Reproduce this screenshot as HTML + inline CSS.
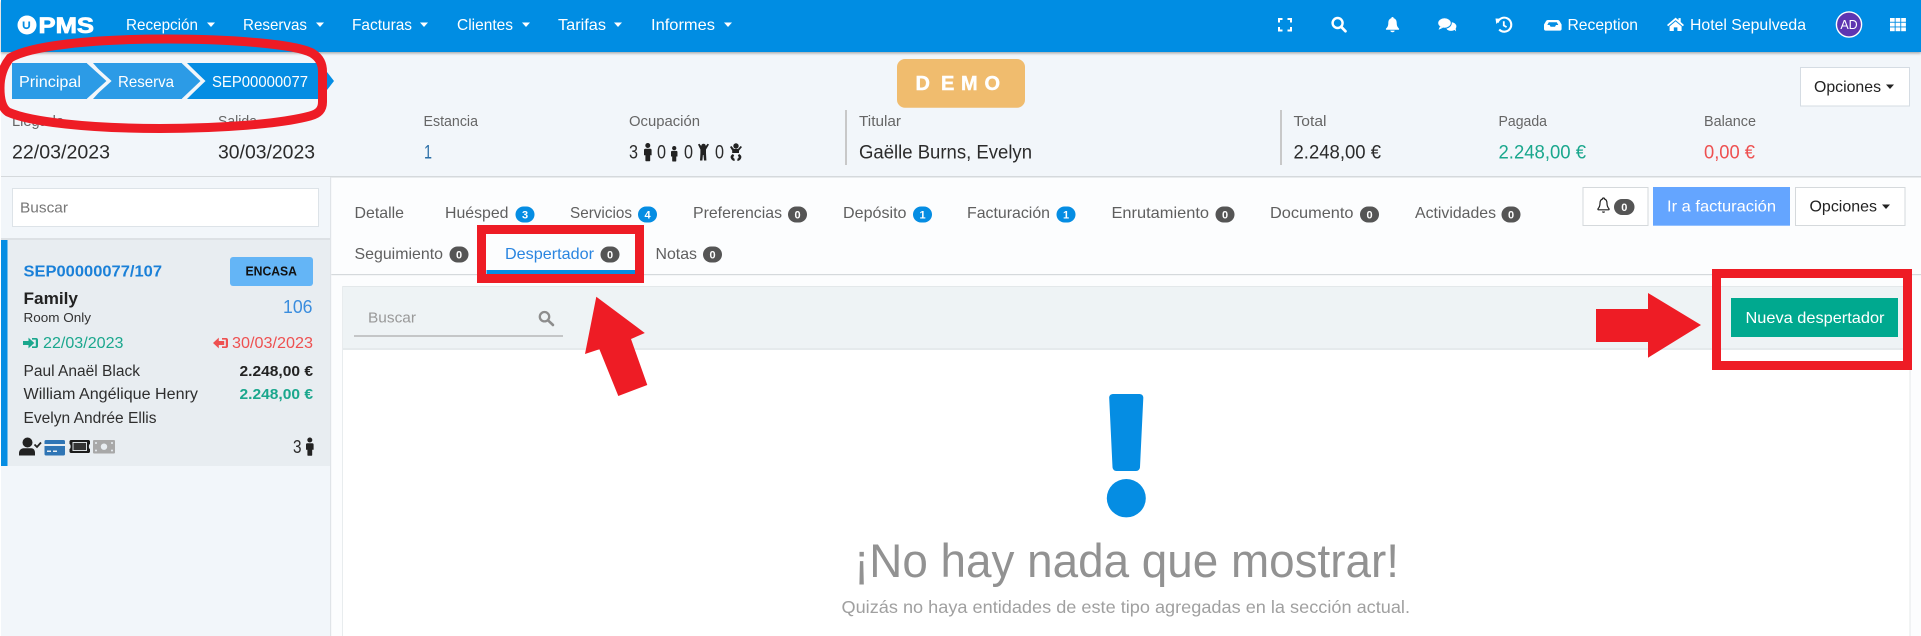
<!DOCTYPE html>
<html lang="es">
<head>
<meta charset="utf-8">
<title>PMS - Despertador</title>
<style>
html,body{margin:0;padding:0;background:#fff;width:1921px;height:636px;overflow:hidden}
svg{display:block;position:absolute;left:0;top:0}
text{font-family:"Liberation Sans",sans-serif;font-size:15px}
.n{fill:#fff;font-size:16px}
.l{fill:#666;font-size:14.5px}
.v{fill:#2b2b2b;font-size:19px}
.t{fill:#5f5f5f;font-size:16px}
.bt{fill:#fff;font-size:11px;font-weight:700;text-anchor:middle}
.c{fill:#2e2e2e;font-size:15.5px}
</style>
</head>
<body>
<svg width="1921" height="636" viewBox="0 0 1921 636" xmlns="http://www.w3.org/2000/svg">
<defs>
<filter id="s" x="-1%" y="-20%" width="102%" height="150%"><feDropShadow dx="0" dy="1.5" stdDeviation="1.2" flood-color="#000" flood-opacity=".3"/></filter>
<g id="bb"><rect x="-9.5" y="-8" width="19" height="16" rx="8"/></g>
<g id="person"><circle cx="3.8" cy="2.5" r="2.5"/><path d="M1.3 5.8h5c.8 0 1.3.6 1.3 1.300v5.200H6.200v5.200c0 .6-.5 .8-1 .8H2.400c-.5 0-1-.2-1-.8V12.300H0V7.100c0-.7.5-1.300 1.300-1.300z"/></g>
</defs>

<rect x="0" y="0" width="1921" height="636" fill="#fff"/>

<!-- sub header -->
<rect x="1" y="52" width="1920" height="124" fill="#f2f6fa"/>
<rect x="1" y="176" width="1920" height="1.5" fill="#d5d9dc"/>

<!-- navbar -->
<rect x="1" y="0" width="1920" height="52" fill="#058de3" filter="url(#s)"/>

<!-- logo -->
<circle cx="27" cy="25" r="9.5" fill="#fff"/>
<path d="M18 21c2-6 8-8 12-6" stroke="#058de3" stroke-width="1.2" fill="none"/>
<path d="M23.600 21.500v4.200c0 3.400 5.600 3.400 5.600 0v-4.200" stroke="#058de3" stroke-width="1.800" fill="none"/>
<text x="38.5" y="33" textLength="55.5" lengthAdjust="spacingAndGlyphs" style="font-size:22px;font-weight:700;fill:#fff;stroke:#fff;stroke-width:.8">PMS</text>

<!-- nav -->
<text class="n" x="126" y="30" textLength="72" lengthAdjust="spacingAndGlyphs">Recepción</text>
<path d="M207 22.500h8l-4 4.500z" fill="#fff"/>
<text class="n" x="243" y="30" textLength="64" lengthAdjust="spacingAndGlyphs">Reservas</text>
<path d="M316 22.500h8l-4 4.500z" fill="#fff"/>
<text class="n" x="352" y="30" textLength="60" lengthAdjust="spacingAndGlyphs">Facturas</text>
<path d="M420 22.500h8l-4 4.500z" fill="#fff"/>
<text class="n" x="457" y="30" textLength="56" lengthAdjust="spacingAndGlyphs">Clientes</text>
<path d="M522 22.500h8l-4 4.500z" fill="#fff"/>
<text class="n" x="558" y="30" textLength="48" lengthAdjust="spacingAndGlyphs">Tarifas</text>
<path d="M614 22.500h8l-4 4.500z" fill="#fff"/>
<text class="n" x="651" y="30" textLength="64" lengthAdjust="spacingAndGlyphs">Informes</text>
<path d="M724 22.500h8l-4 4.500z" fill="#fff"/>

<!-- nav icons -->
<path d="M1279 22.500V19h3.500M1287.500 19h3.500v3.500M1291 27v3.500h-3.500M1282.500 30.500H1279V27" fill="none" stroke="#fff" stroke-width="2"/>
<circle cx="1337.600" cy="23" r="5" fill="none" stroke="#fff" stroke-width="2.400"/>
<path d="M1341.200 26.800l4.200 4.400" stroke="#fff" stroke-width="2.800" stroke-linecap="round"/>
<path d="M1392.500 17c.8 0 1.200.5 1.200 1.200 2.300.6 3 2.600 3 4.800 0 3.400 1.200 4.400 2.300 5.600.3.600 0 1.200-.6 1.200h-11.800c-.6 0-.9-.6-.6-1.200 1.100-1.200 2.300-2.200 2.300-5.600 0-2.200.7-4.200 3-4.800 0-.7.4-1.200 1.200-1.200z" fill="#fff"/>
<path d="M1390.300 30.600h4.400c0 1-1 1.600-2.200 1.600s-2.200-.6-2.200-1.600z" fill="#fff"/>
<ellipse cx="1451" cy="26.500" rx="5.400" ry="4.400" fill="#fff"/>
<path d="M1453.500 29l2.600 2.400-.6-3.600z" fill="#fff"/>
<ellipse cx="1444.500" cy="23" rx="6.800" ry="5.200" fill="#fff" stroke="#058de3" stroke-width="1"/>
<path d="M1440 26.500l-1.400 3.200 4.400-2z" fill="#fff"/>
<path d="M1497.600 22.500a7 7 0 1 1 1.600 7" fill="none" stroke="#fff" stroke-width="2.100"/>
<path d="M1495.500 18.500l6 .3-5.200 5.200z" fill="#fff"/>
<path d="M1503.800 21.200v4.300l2.800 1.600" fill="none" stroke="#fff" stroke-width="1.800"/>
<path d="M1548 20h9.500c1 0 1.600.4 2.100 1.100l2 3.400v4.500c0 .9-.7 1.600-1.600 1.600h-14.400c-.9 0-1.600-.7-1.600-1.600v-4.500l2-3.400c.5-.7 1.100-1.100 2-1.100z" fill="#fff"/>
<path d="M1548.800 22.200h8l1.500 2.800h-2.300l-1 1.800h-4.400l-1-1.800h-2.300z" fill="#058de3"/>
<text class="n" x="1567.500" y="30" textLength="70.500" lengthAdjust="spacingAndGlyphs">Reception</text>
<path d="M1667 25l8.600-7.400 2.900 2.500v-2h2.200v3.900l3.300 3-1.200 1.300-7.200-6.200-7.400 6.200z" fill="#fff"/>
<path d="M1669.600 26.400l6-5 6 5v4.600h-4.200v-3.600h-3.600V31h-4.200z" fill="#fff"/>
<text class="n" x="1690" y="30" textLength="116" lengthAdjust="spacingAndGlyphs">Hotel Sepulveda</text>
<circle cx="1849" cy="24.500" r="12.600" fill="#5e35b1" stroke="#fff" stroke-width="1.400"/>
<text x="1849" y="29" text-anchor="middle" style="font-size:12.500px;fill:#fff">AD</text>
<g fill="#fff">
<rect x="1890" y="18" width="4.700" height="3.800"/><rect x="1895.600" y="18" width="4.700" height="3.800"/><rect x="1901.200" y="18" width="4.700" height="3.800"/>
<rect x="1890" y="22.700" width="4.700" height="3.800"/><rect x="1895.600" y="22.700" width="4.700" height="3.800"/><rect x="1901.200" y="22.700" width="4.700" height="3.800"/>
<rect x="1890" y="27.400" width="4.700" height="3.800"/><rect x="1895.600" y="27.400" width="4.700" height="3.800"/><rect x="1901.200" y="27.400" width="4.700" height="3.800"/>
</g>

<!-- breadcrumb -->
<path d="M320 63L334 81L320 99z" fill="#058de3"/>
<path d="M12 63H88L110 81L88 99H12z" fill="#2c9be6"/>
<path d="M187 63H318V99H187L205 81z" fill="#058de3"/>
<path d="M93 63H183L203 81L183 99H93L109 81z" fill="#2c9be6"/>
<path d="M88 62L109 81L88 100M183 62L203 81L183 100" fill="none" stroke="#f2f6fa" stroke-width="3.500"/>
<text x="19" y="87" textLength="62" lengthAdjust="spacingAndGlyphs" style="font-size:16px;fill:#fff">Principal</text>
<text x="118" y="87" textLength="56" lengthAdjust="spacingAndGlyphs" style="font-size:16px;fill:#fff">Reserva</text>
<text x="212" y="87" textLength="96" lengthAdjust="spacingAndGlyphs" style="font-size:16px;fill:#fff">SEP00000077</text>

<!-- DEMO -->
<rect x="897" y="59" width="128" height="48.700" rx="8" fill="#f0bc6e"/>
<g style="font-weight:700;fill:#fff;stroke:#fff;stroke-width:.4">
<text x="915.500" y="90" style="font-size:20px;font-weight:700">D</text>
<text x="941" y="90" style="font-size:20px;font-weight:700">E</text>
<text x="961" y="90" style="font-size:20px;font-weight:700">M</text>
<text x="984.500" y="90" style="font-size:20px;font-weight:700">O</text>
</g>

<!-- top options -->
<rect x="1800.500" y="67.500" width="109" height="38.500" fill="#fff" stroke="#d5dce3"/>
<text x="1814" y="92" textLength="67" lengthAdjust="spacingAndGlyphs" style="font-size:16px;fill:#222">Opciones</text>
<path d="M1886 84.500h8l-4 4.500z" fill="#222"/>

<!-- summary -->
<text class="l" x="12" y="126" textLength="52" lengthAdjust="spacingAndGlyphs">Llegada</text>
<text class="l" x="218" y="126" textLength="39" lengthAdjust="spacingAndGlyphs">Salida</text>
<text class="l" x="423.500" y="126" textLength="54.500" lengthAdjust="spacingAndGlyphs">Estancia</text>
<text class="l" x="629" y="126" textLength="71" lengthAdjust="spacingAndGlyphs">Ocupación</text>
<text class="v" x="12" y="158.500" textLength="98" lengthAdjust="spacingAndGlyphs">22/03/2023</text>
<text class="v" x="218" y="158.500" textLength="97" lengthAdjust="spacingAndGlyphs">30/03/2023</text>
<text class="v" x="424" y="158.500" style="fill:#2a6ea6" textLength="8" lengthAdjust="spacingAndGlyphs">1</text>
<text class="v" x="629" y="158.500" textLength="9" lengthAdjust="spacingAndGlyphs">3</text>
<use href="#person" x="644" y="143" fill="#222"/>
<text class="v" x="657" y="158.500" textLength="9" lengthAdjust="spacingAndGlyphs">0</text>
<use href="#person" transform="translate(671,146) scale(.85,.85)" fill="#222"/>
<text class="v" x="684" y="158.500" textLength="9" lengthAdjust="spacingAndGlyphs">0</text>
<g fill="#222"><circle cx="703.500" cy="146" r="2.300"/><path d="M698 144.500l1.400-.8 2.400 3h3.400l2.400-3 1.400.8-3 5v3.700l.4 7.300h-2.400l-.5-5.500h-.6l-.5 5.500h-2.400l.4-7.300v-3.700z"/></g>
<text class="v" x="715" y="158.500" textLength="9" lengthAdjust="spacingAndGlyphs">0</text>
<g fill="#222"><circle cx="736" cy="146" r="2.700"/><path d="M730 147l1.400-1 2.600 3h4l2.600-3 1.400 1-3 3.600v2.400h-6.800v-2.400z"/><path d="M733 154c-2 1-3 2.500-2 4.500.7 1.400 2 2.300 3.600 2.500v-2.200c-1.400-.4-1.800-2-.4-3zM739 154c2 1 3 2.500 2 4.500-.7 1.400-2 2.300-3.600 2.500v-2.200c1.400-.4 1.800-2 .4-3z"/></g>

<rect x="845" y="110" width="2" height="55" fill="#c8c8c8"/>
<text class="l" x="859" y="126" textLength="42" lengthAdjust="spacingAndGlyphs">Titular</text>
<text class="v" x="859" y="158.500" textLength="173" lengthAdjust="spacingAndGlyphs">Gaëlle Burns, Evelyn</text>
<rect x="1280" y="110" width="2" height="55" fill="#c8c8c8"/>
<text class="l" x="1293.500" y="126" textLength="33" lengthAdjust="spacingAndGlyphs">Total</text>
<text class="v" x="1293.500" y="158.500" textLength="87.500" lengthAdjust="spacingAndGlyphs">2.248,00 €</text>
<text class="l" x="1498.500" y="126" textLength="48.500" lengthAdjust="spacingAndGlyphs">Pagada</text>
<text class="v" x="1498.500" y="158.500" textLength="87.500" lengthAdjust="spacingAndGlyphs" style="fill:#1aa78d">2.248,00 €</text>
<text class="l" x="1704" y="126" textLength="52" lengthAdjust="spacingAndGlyphs">Balance</text>
<text class="v" x="1704" y="158.500" textLength="51" lengthAdjust="spacingAndGlyphs" style="fill:#ee5050">0,00 €</text>

<!-- left panel -->
<rect x="1" y="177" width="329" height="459" fill="#f2f6fa"/>
<rect x="330" y="177" width="1.300" height="459" fill="#e0e4e8"/>
<rect x="12.500" y="188.500" width="306" height="38" fill="#fff" stroke="#dde3e8"/>
<text x="20" y="212.500" textLength="48" lengthAdjust="spacingAndGlyphs" style="font-size:15px;fill:#777">Buscar</text>
<rect x="1" y="238" width="329" height="2" fill="#dde1e5"/>
<rect x="1" y="240" width="329" height="226" fill="#e8edf1"/>
<rect x="1" y="240" width="6.500" height="226" fill="#058de3"/>
<text x="23.500" y="276.500" textLength="138.500" lengthAdjust="spacingAndGlyphs" style="font-size:16px;font-weight:700;fill:#1a80d8">SEP00000077/107</text>
<rect x="230" y="257" width="83" height="29" rx="3" fill="#64b5f6"/>
<text x="245.500" y="275.500" textLength="51.500" lengthAdjust="spacingAndGlyphs" style="font-size:12.500px;font-weight:700;fill:#111">ENCASA</text>
<text x="23.500" y="304" textLength="54.500" lengthAdjust="spacingAndGlyphs" style="font-size:17px;font-weight:700;fill:#222">Family</text>
<text x="23.500" y="322" textLength="67.500" lengthAdjust="spacingAndGlyphs" style="font-size:13px;fill:#333">Room Only</text>
<text x="283" y="313" textLength="29.500" lengthAdjust="spacingAndGlyphs" style="font-size:18px;fill:#3a8dde">106</text>
<path d="M23 341h5.500v-3.400l5.800 5.400-5.800 5.400V345H23z" fill="#1aa78d"/>
<path d="M32 338h4c1.200 0 2 .8 2 2v6c0 1.200-.8 2-2 2h-4v-1.600h3.800v-6.800H32z" fill="#1aa78d"/>
<text x="43" y="348" textLength="80.500" lengthAdjust="spacingAndGlyphs" style="font-size:15.500px;fill:#1aa78d">22/03/2023</text>
<path d="M213 343l5.800-5.400V341h5.400v4h-5.400v3.400z" fill="#ee5050"/>
<path d="M222 338h4c1.200 0 2 .8 2 2v6c0 1.200-.8 2-2 2h-4v-1.600h3.800v-6.800H222z" fill="#ee5050"/>
<text x="232" y="348" textLength="81" lengthAdjust="spacingAndGlyphs" style="font-size:15.500px;fill:#ee5050">30/03/2023</text>
<text class="c" x="23.500" y="376" textLength="116.500" lengthAdjust="spacingAndGlyphs">Paul Anaël Black</text>
<text x="239.500" y="376" textLength="73.500" lengthAdjust="spacingAndGlyphs" style="font-size:15px;font-weight:700;fill:#222">2.248,00 €</text>
<text class="c" x="23.500" y="399" textLength="174.500" lengthAdjust="spacingAndGlyphs">William Angélique Henry</text>
<text x="239.500" y="399" textLength="73.500" lengthAdjust="spacingAndGlyphs" style="font-size:15px;font-weight:700;fill:#1aa78d">2.248,00 €</text>
<text class="c" x="23.500" y="423" textLength="133" lengthAdjust="spacingAndGlyphs">Evelyn Andrée Ellis</text>

<!-- card icons -->
<circle cx="27.500" cy="442.500" r="5" fill="#222"/>
<path d="M19 455.500v-2.500c0-3 2.500-4.800 4.500-4.800h8c2 0 3.500 1.800 3.500 4.800v2.500z" fill="#222"/>
<path d="M34.500 444.500l2.500 2.500 4-4.500" fill="none" stroke="#222" stroke-width="1.800"/>
<rect x="44.500" y="440" width="20.500" height="15.500" rx="1.500" fill="#2f75b5"/>
<rect x="44.500" y="444" width="20.500" height="2" fill="#e8edf1"/>
<rect x="47" y="450.500" width="4" height="1.500" fill="#e8edf1"/><rect x="53" y="450.500" width="4" height="1.500" fill="#e8edf1"/>
<path d="M70.500 440h18.500l1 1v3c-1.500 0-1.500 5 0 5v3l-1 1H70.500l-1-1v-3c1.500 0 1.500-5 0-5v-3z" fill="#1c1c1c"/>
<rect x="73" y="442.500" width="13.500" height="8" fill="#333" stroke="#d8dde0" stroke-width="1"/>
<rect x="93" y="440" width="22" height="13.500" rx="1" fill="#a8a8a8"/>
<circle cx="104" cy="446.700" r="3.200" fill="#e8edf1"/>
<circle cx="96" cy="443" r="1" fill="#e8edf1"/><circle cx="112" cy="443" r="1" fill="#e8edf1"/><circle cx="96" cy="450.500" r="1" fill="#e8edf1"/><circle cx="112" cy="450.500" r="1" fill="#e8edf1"/>
<text x="293" y="453" textLength="8.500" lengthAdjust="spacingAndGlyphs" style="font-size:18px;fill:#2b2b2b">3</text>
<use href="#person" x="306" y="437.500" fill="#222"/>

<!-- main -->
<rect x="331.300" y="177.500" width="1590" height="458.500" fill="#fcfdfe"/>
<rect x="331.300" y="274" width="1590" height="1.200" fill="#d5d9dc"/>

<!-- tabs row 1 -->
<text class="t" x="354.500" y="218" textLength="49.500" lengthAdjust="spacingAndGlyphs">Detalle</text>
<use href="#bb" x="525" y="214.500" fill="#058de3"/><text class="bt" x="525" y="218.500">3</text>
<text class="t" x="445" y="218" textLength="63.500" lengthAdjust="spacingAndGlyphs">Huésped</text>
<text class="t" x="570" y="218" textLength="62" lengthAdjust="spacingAndGlyphs">Servicios</text>
<use href="#bb" x="647.500" y="214.500" fill="#058de3"/><text class="bt" x="647.500" y="218.500">4</text>
<text class="t" x="693" y="218" textLength="89" lengthAdjust="spacingAndGlyphs">Preferencias</text>
<use href="#bb" x="797.500" y="214.500" fill="#555"/><text class="bt" x="797.500" y="218.500">0</text>
<text class="t" x="843" y="218" textLength="63.500" lengthAdjust="spacingAndGlyphs">Depósito</text>
<use href="#bb" x="922.500" y="214.500" fill="#058de3"/><text class="bt" x="922.500" y="218.500">1</text>
<text class="t" x="967" y="218" textLength="83" lengthAdjust="spacingAndGlyphs">Facturación</text>
<use href="#bb" x="1066" y="214.500" fill="#058de3"/><text class="bt" x="1066" y="218.500">1</text>
<text class="t" x="1111.500" y="218" textLength="97.500" lengthAdjust="spacingAndGlyphs">Enrutamiento</text>
<use href="#bb" x="1225" y="214.500" fill="#555"/><text class="bt" x="1225" y="218.500">0</text>
<text class="t" x="1270" y="218" textLength="83.500" lengthAdjust="spacingAndGlyphs">Documento</text>
<use href="#bb" x="1369.500" y="214.500" fill="#555"/><text class="bt" x="1369.500" y="218.500">0</text>
<text class="t" x="1415" y="218" textLength="81" lengthAdjust="spacingAndGlyphs">Actividades</text>
<use href="#bb" x="1511" y="214.500" fill="#555"/><text class="bt" x="1511" y="218.500">0</text>

<!-- tabs row 2 -->
<text class="t" x="354.500" y="259" textLength="88.500" lengthAdjust="spacingAndGlyphs">Seguimiento</text>
<use href="#bb" x="459" y="254.500" fill="#555"/><text class="bt" x="459" y="258.500">0</text>
<text class="t" x="505" y="259" textLength="89" lengthAdjust="spacingAndGlyphs" style="fill:#2a85e0">Despertador</text>
<use href="#bb" x="610" y="254.500" fill="#555"/><text class="bt" x="610" y="258.500">0</text>
<rect x="486.500" y="270" width="148.500" height="4" fill="#058de3"/>
<text class="t" x="655.500" y="259" textLength="41.500" lengthAdjust="spacingAndGlyphs">Notas</text>
<use href="#bb" x="712.500" y="254.500" fill="#555"/><text class="bt" x="712.500" y="258.500">0</text>

<!-- right buttons -->
<rect x="1583" y="187.500" width="65" height="38" fill="#fff" stroke="#d5d9dc"/>
<path d="M1603.500 198c.7 0 1 .4 1 1 2 .6 2.500 2.400 2.500 4.400 0 3 1 4.300 2 5.400.3.400 0 1-.5 1h-10c-.5 0-.8-.6-.5-1 1-1.100 2-2.400 2-5.400 0-2 .5-3.800 2.500-4.400 0-.6.300-1 1-1z" fill="none" stroke="#222" stroke-width="1.200"/>
<path d="M1602 211.500h3c0 .8-.6 1.300-1.500 1.300s-1.500-.5-1.500-1.300z" fill="#222"/>
<rect x="1614" y="199" width="20.500" height="16" rx="8" fill="#555"/>
<text class="bt" x="1624.300" y="211">0</text>
<rect x="1653" y="187" width="137" height="38.700" fill="#64a5ff"/>
<text x="1667" y="211.500" textLength="109" lengthAdjust="spacingAndGlyphs" style="font-size:16px;fill:#fff">Ir a facturación</text>
<rect x="1795.500" y="187.500" width="109.500" height="38" fill="#fff" stroke="#d5d9dc"/>
<text x="1809.500" y="211.500" textLength="67.500" lengthAdjust="spacingAndGlyphs" style="font-size:16px;fill:#222">Opciones</text>
<path d="M1882 204.500h8l-4 4.500z" fill="#222"/>

<!-- list card -->
<rect x="342" y="286" width="1568" height="350" fill="#fff"/>
<rect x="342" y="286" width="1568" height="64" fill="#eef3f5"/>
<rect x="342" y="286" width="1568" height="1" fill="#e3e8ea"/>
<rect x="342" y="348" width="1568" height="2" fill="#e5eaec"/>
<rect x="342" y="286" width="1" height="350" fill="#e8ecee"/>
<rect x="1909.500" y="286" width="1" height="350" fill="#e4e8ea"/>
<text x="368" y="322.500" textLength="48" lengthAdjust="spacingAndGlyphs" style="font-size:15px;fill:#999">Buscar</text>
<circle cx="544.500" cy="316.700" r="4.700" fill="none" stroke="#8d8d8d" stroke-width="2.300"/>
<path d="M548 320.300l5 4.700" stroke="#8d8d8d" stroke-width="2.600" stroke-linecap="round"/>
<rect x="354" y="335.500" width="209" height="1" fill="#999"/>
<rect x="1731" y="298" width="167" height="39" fill="#00a98f"/>
<text x="1745.500" y="323" textLength="139" lengthAdjust="spacingAndGlyphs" style="font-size:16px;fill:#fff">Nueva despertador</text>

<!-- empty state -->
<path d="M1113 394h26.500c2.300 0 4 1.800 3.800 4l-3.300 69c-.1 2.300-1.800 4-4 4h-19.500c-2.200 0-3.900-1.700-4-4l-3.300-69c-.2-2.200 1.500-4 3.800-4z" fill="#058de3"/>
<ellipse cx="1126.300" cy="498.200" rx="19.500" ry="19.200" fill="#058de3"/>
<text x="854" y="577" textLength="545" lengthAdjust="spacingAndGlyphs" style="font-size:47px;fill:#929292">¡No hay nada que mostrar!</text>
<text x="841.500" y="613" textLength="568.500" lengthAdjust="spacingAndGlyphs" style="font-size:17.500px;fill:#a0a0a0">Quizás no haya entidades de este tipo agregadas en la sección actual.</text>

<!-- red annotations -->
<path d="M0 88C0 72 6 63 10 58C30 46 90 39 168 39C230 39 295 44 312 53C320 58 322.500 64 322.500 72L322.500 102C322.500 110 318 114 310 116C280 124 220 128.500 160 128.500C90 128.500 30 122 8 112C2 108 0 100 0 88Z" fill="none" stroke="#ee1c25" stroke-width="9"/>
<rect x="481.500" y="229.500" width="158" height="49" fill="none" stroke="#ee1c25" stroke-width="9"/>
<path d="M596.300 296.700L644.800 333L631 339L647.300 385L618.300 396L599.400 349.300L585 354z" fill="#ee1c25"/>
<rect x="1716.500" y="273.500" width="191" height="92" fill="none" stroke="#ee1c25" stroke-width="9"/>
<path d="M1596 309H1648V293L1701 325L1648 357.700V342H1596z" fill="#ee1c25"/>
</svg>
</body>
</html>
